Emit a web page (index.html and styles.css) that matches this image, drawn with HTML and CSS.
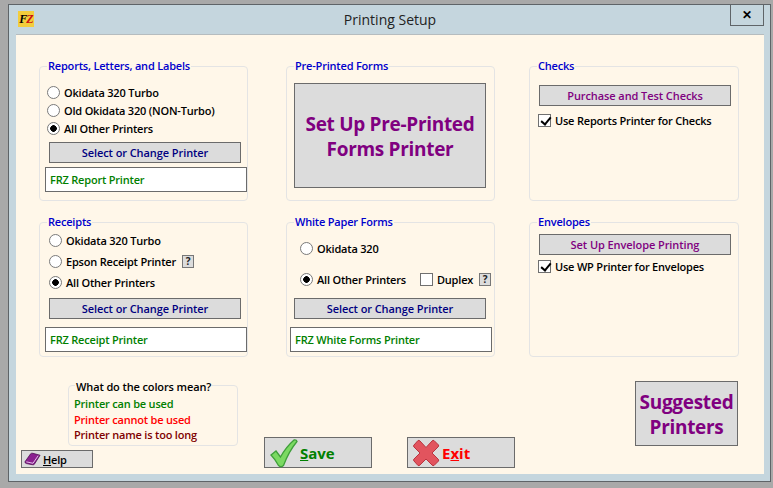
FILE: index.html
```html
<!DOCTYPE html>
<html lang="en">
<head>
<meta charset="utf-8">
<title>Printing Setup</title>
<link rel="stylesheet" href="styles.css">
</head>
<body>
<div class="window">
  <header class="titlebar">
    <div class="logo"><span class="logo-f">F</span><span class="logo-z">Z</span></div>
    <div class="title">Printing Setup</div>
    <button class="close">&#10005;</button>
  </header>
  <main class="content">
    <div class="groups">
      <section class="group g-reports">
        <h2 class="legend">Reports, Letters, and Labels</h2>
        <label class="row"><input class="radio" type="radio" name="r1">Okidata 320 Turbo</label>
        <label class="row"><input class="radio" type="radio" name="r1">Old Okidata 320 (NON-Turbo)</label>
        <label class="row"><input class="radio" type="radio" name="r1" checked>All Other Printers</label>
        <button class="btn">Select or Change Printer</button>
        <div class="field">FRZ Report Printer</div>
      </section>
      <section class="group g-forms">
        <h2 class="legend">Pre-Printed Forms</h2>
        <button class="btn-big btn-forms">Set Up Pre-Printed Forms Printer</button>
      </section>
      <section class="group g-checks">
        <h2 class="legend">Checks</h2>
        <button class="btn purple">Purchase and Test Checks</button>
        <label class="row"><input class="check" type="checkbox" checked>Use Reports Printer for Checks</label>
      </section>
      <section class="group g-receipts">
        <h2 class="legend">Receipts</h2>
        <label class="row"><input class="radio" type="radio" name="r2">Okidata 320 Turbo</label>
        <label class="row"><input class="radio" type="radio" name="r2">Epson Receipt Printer<span class="q q-epson">?</span></label>
        <label class="row"><input class="radio" type="radio" name="r2" checked>All Other Printers</label>
        <button class="btn">Select or Change Printer</button>
        <div class="field">FRZ Receipt Printer</div>
      </section>
      <section class="group g-white">
        <h2 class="legend">White Paper Forms</h2>
        <label class="row"><input class="radio" type="radio" name="r3">Okidata 320</label>
        <div class="row">
          <label class="inline"><input class="radio" type="radio" name="r3" checked>All Other Printers</label>
          <label class="inline duplex"><input class="check" type="checkbox">Duplex</label>
          <span class="q q-duplex">?</span>
        </div>
        <button class="btn">Select or Change Printer</button>
        <div class="field">FRZ White Forms Printer</div>
      </section>
      <section class="group g-env">
        <h2 class="legend">Envelopes</h2>
        <button class="btn purple">Set Up Envelope Printing</button>
        <label class="row"><input class="check" type="checkbox" checked>Use WP Printer for Envelopes</label>
      </section>
    </div>
    <div class="footer">
      <div class="footer-left">
        <section class="colors">
          <h2 class="legend legend-black">What do the colors mean?</h2>
          <div class="c-green">Printer can be used</div>
          <div class="c-red">Printer cannot be used</div>
          <div class="c-dark">Printer name is too long</div>
        </section>
        <button class="help">
          <svg class="help-icon" viewBox="0 0 18 14" width="17" height="14"><path d="M1 10 L7 1.500 Q8 .5 9.500 1 L17 3 L11 12.500 Q10 13.500 8.500 13 L2.500 11.800 Q.5 11 1 10Z" fill="#8a1f8f" stroke="#4a0f50" stroke-width=".8"/><path d="M2.500 10 L9.500 11.500 L15 3.500" fill="none" stroke="#e9c9ee" stroke-width="1"/></svg>
          <span><u>H</u>elp</span>
        </button>
      </div>
      <button class="action save">
        <svg viewBox="0 0 30 30" width="30" height="30"><path d="M2 17 L7 13 L11.500 19 Q17 9 25 2 Q27.500 1.500 28 3.500 Q20 13 14.500 27.500 Q12 30 9.500 27.500 Q6 21 2 17Z" fill="#7bd962" stroke="#3f9f3a" stroke-width="1.300"/></svg>
        <span><u>S</u>ave</span>
      </button>
      <button class="action exit">
        <svg viewBox="0 0 28 28" width="28" height="28"><path d="M2 6 L6 1.500 Q7 1 8 2 L14 8.500 L20 2 Q21 1 22 1.500 L26.500 6 Q27 7 26 8 L20 14 L26 20 Q27 21 26.500 22 L22 26.500 Q21 27 20 26 L14 20 L8 26 Q7 27 6 26.500 L2 22 Q1 21 2 20 L8 14 L2 8 Q1 7 2 6Z" fill="#e2545e" stroke="#b9343f" stroke-width="1"/></svg>
        <span>E<u>x</u>it</span>
      </button>
      <button class="btn-big btn-suggest">Suggested Printers</button>
    </div>
  </main>
</div>
</body>
</html>
```

FILE: styles.css
```css
* { box-sizing: border-box; }
html, body { margin: 0; height: 100%; }
body {
  width: 773px;
  height: 488px;
  overflow: hidden;
  background: #a9a9a9;
  padding: 4px 2px 0 8px;
  font-family: "Open Sans", "Noto Sans", sans-serif;
  font-size: 11px;
  font-weight: 600;
  letter-spacing: -0.2px;
  color: #000;
}
button { font-family: inherit; letter-spacing: inherit; padding: 0; cursor: default; }
.window {
  width: 763px;
  height: 478px;
  border: 1px solid #5f6468;
  background: #c5d6de;
  padding: 0 6px 7px 7px;
  display: flex;
  flex-direction: column;
}
.titlebar {
  height: 29px;
  flex: none;
  display: grid;
  grid-template-columns: 1fr auto 1fr;
  align-items: start;
  margin: 0 -6px 0 -7px;
  padding: 0 6px 0 9px;
}
.logo {
  width: 16px;
  height: 16px;
  margin-top: 6px;
  background: #f3cd3c;
  font-family: "Liberation Serif", serif;
  font-style: italic;
  font-weight: 700;
  font-size: 12px;
  line-height: 16px;
  text-align: center;
  letter-spacing: -1px;
}
.logo-z { color: #c11; }
.title {
  font-size: 14px;
  font-weight: 400;
  letter-spacing: 0;
  line-height: 20px;
  margin: 5px 2px 0 0;
  color: #222;
}
.close {
  justify-self: end;
  width: 34px;
  height: 21px;
  background: #c5d6de;
  border: 1px solid #5f6468;
  border-top: 0;
  font-size: 12px;
  font-weight: 700;
  color: #000;
  line-height: 20px;
}
.content {
  flex: 1;
  background: #fff7e9;
  border-top: 1px solid #b5bcbf;
  display: flex;
  flex-direction: column;
  padding: 31px 0 0 0;
}
.groups {
  display: grid;
  grid-template-columns: 247px 243px 210px;
  grid-template-rows: 135px 135px;
  row-gap: 21px;
  margin-left: 23px;
}
.group { width: 209px; }
.g-checks, .g-env { width: 210px; }
.group, .colors {
  position: relative;
  border: 1px solid #e4e4e4;
  border-radius: 4px;
}
.legend {
  position: absolute;
  top: -9px;
  left: 7px;
  margin: 0;
  padding: 0 1px;
  background: #fff7e9;
  font-size: 11px;
  line-height: 15px;
  font-weight: 600;
  color: #0000cc;
  white-space: nowrap;
}
.legend-black { color: #000; letter-spacing: -0.12px; }
.row {
  display: flex;
  align-items: center;
  white-space: nowrap;
}
.inline { display: flex; align-items: center; }
.radio {
  appearance: none;
  width: 13px;
  height: 13px;
  margin: 0 4px 0 0;
  flex: none;
  border: 1px solid #7a7a7a;
  border-radius: 50%;
  background: #fff;
}
.radio:checked {
  background: radial-gradient(circle, #000 0 3px, #fff 3.600px);
}
.check {
  appearance: none;
  width: 13px;
  height: 13px;
  margin: 0 4px 0 0;
  flex: none;
  border: 1px solid #707070;
  background: #fff;
  position: relative;
}
.check:checked::after {
  content: "";
  position: absolute;
  left: 3.500px;
  top: 0;
  width: 4px;
  height: 8px;
  border: solid #000;
  border-width: 0 2px 2px 0;
  transform: rotate(40deg);
}
.btn {
  display: block;
  width: 192px;
  height: 21px;
  background: #dcdcdc;
  border: 1px solid #6b6b6b;
  color: #000080;
  font-size: 11px;
  font-weight: 600;
  letter-spacing: -0.08px;
  line-height: 19px;
}
.btn.purple { color: #800080; }
.field {
  width: 202px;
  height: 25px;
  background: #fff;
  border: 1px solid #6b6b6b;
  color: #008000;
  line-height: 23px;
  padding-left: 4px;
}
.q {
  width: 12px;
  height: 13px;
  background: #dcdcdc;
  border: 1px solid #777;
  font-size: 10px;
  font-weight: 700;
  line-height: 11px;
  text-align: center;
  color: #222;
}
.q-epson { margin-left: 6px; }
.q-duplex { margin-left: 6px; }

.g-reports { padding: 16px 0 0 7px; }
.g-reports .row { height: 18px; }
.g-reports .btn { margin: 5px 0 0 2px; }
.g-reports .field { margin: 4px 0 0 -2px; }

.g-receipts { padding: 7px 0 0 9px; }
.g-receipts .row { height: 21px; }
.g-receipts .btn { margin: 5px 0 0 0; }
.g-receipts .field { margin: 8px 0 0 -4px; }

.g-forms { padding: 16px 0 0 7px; }
.btn-big {
  background: #dcdcdc;
  border: 1px solid #6b6b6b;
  color: #800080;
  font-size: 19px;
  font-weight: 700;
  letter-spacing: -0.3px;
  line-height: 25px;
  padding-top: 2px;
}
.btn-forms { display: block; width: 192px; height: 105px; padding-left: 4px; padding-right: 4px; }

.g-white { padding: 10px 0 0 13px; }
.g-white .row { height: 31px; }
.g-white .btn { margin: 3px 0 0 -6px; }
.g-white .field { margin: 8px 0 0 -10px; }
.duplex { margin-left: 14px; }

.g-checks { padding: 18px 0 0 9px; }
.g-checks .row { margin: 8px 0 0 -1px; height: 13px; }
.g-env { padding: 11px 0 0 9px; }
.g-env .row { margin: 5px 0 0 -1px; height: 13px; }

.footer {
  display: flex;
  align-items: flex-end;
  flex: 1;
  padding: 0 0 6px 5px;
}
.footer-left { width: 243px; flex: none; }
.colors {
  width: 170px;
  height: 61px;
  margin: 0 0 4px 47px;
  padding: 10px 0 0 5px;
  line-height: 15.500px;
}
.colors .legend { left: 6px; top: -7px; }
.c-green { color: #008000; }
.c-red { color: #ff0000; }
.c-dark { color: #800000; }
.help {
  display: flex;
  align-items: center;
  gap: 2px;
  width: 72px;
  height: 18px;
  padding-left: 2px;
  background: #dcdcdc;
  border: 1px solid #6b6b6b;
  font-size: 11px;
  font-weight: 600;
  color: #000;
}
.action {
  display: flex;
  align-items: center;
  width: 108px;
  height: 31px;
  background: #dcdcdc;
  border: 1px solid #6b6b6b;
  font-size: 15px;
  font-weight: 700;
  letter-spacing: 0;
}
.save { color: #008000; gap: 1px; padding-left: 4px; margin-right: 35px; }
.exit { color: #ff0000; gap: 2px; padding-left: 4px; margin-right: 120px; }
.btn-suggest {
  width: 103px;
  height: 65px;
  margin-bottom: 22px;
}
```
